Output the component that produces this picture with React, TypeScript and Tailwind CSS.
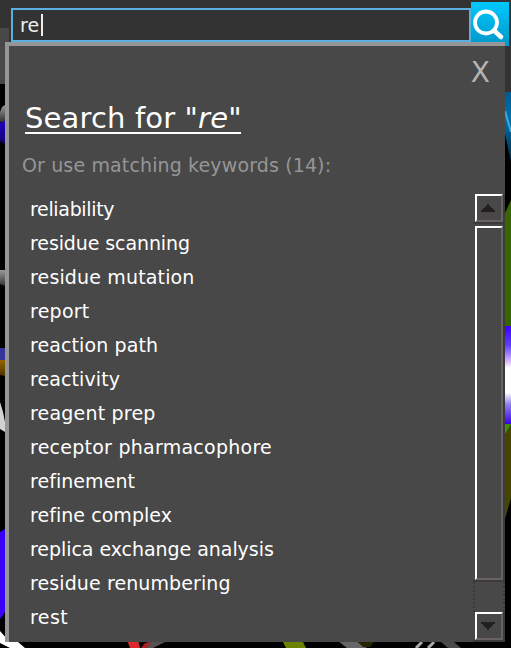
import React from "react";

const keywords: [string, string][] = [
  ["reliability", "tracking-[-0.33px]"],
  ["residue scanning", "tracking-[-0.1px]"],
  ["residue mutation", "tracking-[0.15px]"],
  ["report", "tracking-[0.25px]"],
  ["reaction path", "tracking-[0.1px]"],
  ["reactivity", "tracking-[0.1px]"],
  ["reagent prep", "tracking-[0.2px]"],
  ["receptor pharmacophore", "tracking-[0.25px]"],
  ["refinement", "tracking-[0.05px]"],
  ["refine complex", "tracking-[0.05px]"],
  ["replica exchange analysis", "tracking-[-0.05px]"],
  ["residue renumbering", "tracking-[0.1px]"],
  ["rest", "tracking-[0.4px]"],
];

function Molecules() {
  return (
    <svg className="absolute inset-0" width="511" height="648" viewBox="0 0 511 648">
      <defs>
        <linearGradient id="blueBall" x1="0" y1="0" x2="0" y2="1">
          <stop offset="0" stopColor="#2100c8" />
          <stop offset="1" stopColor="#13006c" />
        </linearGradient>
        <linearGradient id="tube" x1="0" y1="0" x2="0" y2="1">
          <stop offset="0" stopColor="#999" />
          <stop offset="1" stopColor="#333" />
        </linearGradient>
        <linearGradient id="gloss" x1="0" y1="0" x2="0" y2="1">
          <stop offset="0" stopColor="#3b00ff" />
          <stop offset=".2" stopColor="#6040ff" />
          <stop offset=".36" stopColor="#d8b8ff" />
          <stop offset=".43" stopColor="#fff" />
          <stop offset=".68" stopColor="#fff" />
          <stop offset=".8" stopColor="#9080f0" />
          <stop offset="1" stopColor="#3900ee" />
        </linearGradient>
        <linearGradient id="cyan" x1="0" y1="0" x2="0" y2="1">
          <stop offset="0" stopColor="#005c90" />
          <stop offset=".4" stopColor="#0070aa" />
          <stop offset="1" stopColor="#002a42" />
        </linearGradient>
        <linearGradient id="amber" x1="0" y1="0" x2="0" y2="1">
          <stop offset="0" stopColor="#966500" />
          <stop offset="1" stopColor="#4d3300" />
        </linearGradient>
      </defs>
      <path d="M5 105L2 107L0 112V122H5Z" fill="url(#tube)" />
      <path d="M5 121L0 123V141L5 144Z" fill="url(#blueBall)" />
      <path d="M0 270H5V286L0 284Z" fill="url(#tube)" />
      <path d="M0 348H5V360H0Z" fill="#35349a" />
      <path d="M0 360H5V376L0 375Z" fill="url(#amber)" />
      <path d="M0 402L3 412L5 422V432L0 429Z" fill="#d2d2d2" />
      <path d="M5 529L0 532V619L5 612Z" fill="#3900fc" />
      <path d="M0 631L8 640L18 642L25 648H10L0 643Z" fill="#fff" />
      <path d="M127 640H138L140 648H130Z" fill="#dc2828" />
      <path d="M148 642H165L153 648H142Z" fill="#595151" />
      <path d="M145 643L151 642L147 648H141Z" fill="#a32323" />
      <path d="M282 640H302L306 648H286Z" fill="#6b8200" />
      <path d="M338 641H356L367 648H347Z" fill="#666" />
      <path d="M357 641H375L370 647H363Z" fill="#252500" />
      <path d="M422 642L416 648M434 642L428 648" stroke="#aaa" strokeWidth="3" />
      <path d="M441 642H454L461 648H448Z" fill="#4a4a4a" />
      <path d="M505 92H511V162L505 134Z" fill="url(#cyan)" />
      <path d="M505 111L511 132" stroke="#3ea6d9" strokeWidth="2" />
      <path d="M511 200L505 213V326H511Z" fill="#376600" />
      <path d="M505 326H511V424H505Z" fill="url(#gloss)" />
      <path d="M505 424H511V498L505 519Z" fill="#454500" />
      <path d="M505 424H511L505 434Z" fill="#409000" />
    </svg>
  );
}

function ArrowButton({ down = false }: { down?: boolean }) {
  return (
    <div className="flex h-7 w-7 shrink-0 items-center justify-center border-2 border-b-[#686362] border-l-white border-r-[#686362] border-t-white bg-[#484848] pr-[2px]">
      <svg width="14" height="8" viewBox="0 0 14 8" shapeRendering="crispEdges" className={down ? "rotate-180" : ""}>
        <path d="M6 0H8V2H10V4H12V6H14V8H0V6H2V4H4V2H6Z" fill="#231f1e" />
      </svg>
    </div>
  );
}

export default function App() {
  return (
    <div className="relative h-[648px] w-[511px] overflow-hidden bg-black font-['DejaVu_Sans',sans-serif] text-white">
      <Molecules />
      <div className="relative h-[84px] w-full">
        <div className="flex h-[92px] items-start bg-[#333333] pl-[11px] pt-[2px] [clip-path:polygon(0_0,100%_0,100%_100%,505px_100%,505px_84px,0_84px)]">
          <div className="mt-[6px] flex h-[34px] w-[460px] items-center border-2 border-[#5ab0e0] bg-[#333333] pl-[7px] text-[19px] text-[#eee]">
            <span className="w-[22px] whitespace-nowrap pt-px">re</span>
            <span className="-ml-px h-[22px] w-[2px] bg-[#eee]" />
          </div>
          <div className="h-11 w-[38px] bg-linear-to-b from-[#00c8ff] to-[#0098c8]">
            <svg width="38" height="44" viewBox="0 0 38 44" fill="none" stroke="#fff">
              <circle cx="15" cy="20.5" r="11" strokeWidth="3.8" />
              <path d="M23 28.5L30 35" strokeWidth="4.5" strokeLinecap="round" />
            </svg>
          </div>
        </div>
        <div className="absolute left-0 top-7 h-14 w-[9px] bg-[#484848]" />
      </div>

      <div className="absolute left-[5px] top-[42px] flex h-[600px] w-[500px] flex-col border-l-4 border-t-4 border-[#969696] bg-[#484848]">
        <div className="flex h-[54px] justify-end pr-[15px] pt-[13px] text-[28px] leading-[28px] text-[#b4b4b4]">
          <span>X</span>
        </div>
        <div className="ml-4 h-[52px] whitespace-nowrap text-[29px] leading-[37px] tracking-[0.15px]">
          <span className="inline-block h-[34px] w-[216px] border-b-2 border-white">
            Search for "<i>re</i>"
          </span>
        </div>
        <div className="ml-[13px] h-[38px] whitespace-nowrap text-[19px] leading-[26px] tracking-[0.13px] text-[#969696]">
          Or use matching keywords (14):
        </div>
        <div className="flex h-[452px] justify-between">
          <ul className="pl-[21px] pt-[2px] text-[19px] leading-[34px]">
            {keywords.map(([word, tracking]) => (
              <li key={word} className={`h-[34px] whitespace-nowrap ${tracking}`}>{word}</li>
            ))}
          </ul>
          <div className="mt-[4px] flex h-[448px] w-8 shrink-0 flex-col">
            <div className="border-r-2 border-[#3b3b3b] pl-[2px]">
              <ArrowButton />
            </div>
            <div className="h-1 shrink-0 border-r-2 border-t-2 border-[#3b3b3b]" />
            <div className="shrink-0 border-r-2 border-[#3b3b3b] pl-[2px]">
              <div className="h-[354px] w-7 border-2 border-b-[#686362] border-l-white border-r-[#686362] border-t-white bg-[#484848]" />
            </div>
            <div className="h-[2px] shrink-0 bg-[#3b3b3b]" />
            <div className="h-[30px] shrink-0 border-x-2 border-dotted border-[#393939]" />
            <div className="border-r-2 border-[#3b3b3b] pl-[2px]">
              <ArrowButton down />
            </div>
            <div className="h-[2px] shrink-0 bg-[#3b3b3b]" />
          </div>
        </div>
      </div>
    </div>
  );
}
